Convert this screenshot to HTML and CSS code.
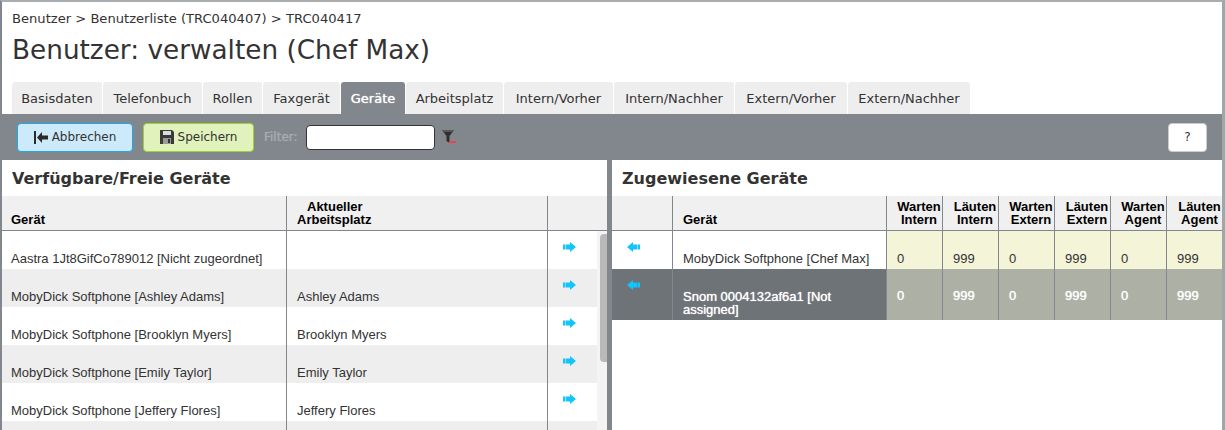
FILE: index.html
```html
<!DOCTYPE html>
<html lang="de">
<head>
  <meta charset="UTF-8">
  <title>Benutzer verwalten</title>
  <link rel="stylesheet" href="styles.css">
</head>
<body>
  <div class="page">
    <div class="crumbs">Benutzer &gt; Benutzerliste (TRC040407) &gt; TRC040417</div>
    <h1>Benutzer: verwalten (Chef Max)</h1>

    <!-- Tabs -->
    <ul class="tabs">
      <li>Basisdaten</li>
      <li>Telefonbuch</li>
      <li>Rollen</li>
      <li>Faxgerät</li>
      <li class="active">Geräte</li>
      <li>Arbeitsplatz</li>
      <li>Intern/Vorher</li>
      <li>Intern/Nachher</li>
      <li>Extern/Vorher</li>
      <li>Extern/Nachher</li>
    </ul>

    <!-- Toolbar -->
    <div class="toolbar">
      <button type="button" class="btn btn-cancel">
        <svg width="14" height="13" viewBox="0 0 14 13"><path d="M0 0h2v13H0zM3 6.5L8 1v3.5h6v4H8V12z" fill="#2a2a2a"/></svg>
        Abbrechen
      </button>
      <button type="button" class="btn btn-save">
        <svg width="14" height="14" viewBox="0 0 14 14"><path d="M0 0h12l2 2v12H0z" fill="#3a3a3a"/><path d="M3 1h8v4H3z" fill="#ddd"/><path d="M3 8h8v6H3z" fill="#9a9a9a"/><path d="M8 9h2v4H8z" fill="#333"/></svg>
        Speichern
      </button>
      <label class="filter-label" for="filter">Filter:</label>
      <input type="text" id="filter" class="filter-input">
      <svg class="filter-icon" width="14" height="15" viewBox="0 0 14 15"><path d="M0 0h12L7.5 6v7l-3-2V6z" fill="#2f2f2f"/><path d="M0 0h12l-2 2H2z" fill="#5a5a5a"/><path d="M7 11h7v2H7z" fill="#e8434a"/></svg>
      <button type="button" class="btn btn-help">?</button>
    </div>

    <div class="panels">
      <!-- Left panel -->
      <section class="panel panel-left">
        <h2>Verfügbare/Freie Geräte</h2>
        <table class="grid">
          <colgroup><col class="c-device"><col class="c-place"><col></colgroup>
          <thead>
            <tr>
              <th>Gerät</th>
              <th class="th-place"><span class="th-indent">Aktueller</span><br>Arbeitsplatz</th>
              <th></th>
            </tr>
          </thead>
        </table>
        <div class="scroll-body">
          <table class="grid">
            <colgroup><col class="c-device"><col class="c-place"><col></colgroup>
            <tbody>
              <tr><td>Aastra 1Jt8GifCo789012 [Nicht zugeordnet]</td><td class="place"></td><td class="act"><svg class="arrow" width="13" height="10" viewBox="0 0 13 10"><path d="M0 2.5h2v5H0zM2.5 2.5H7V0l6 5-6 5V7.5H2.5z" fill="#12c6fb"/></svg></td></tr>
              <tr class="alt"><td>MobyDick Softphone [Ashley Adams]</td><td class="place">Ashley Adams</td><td class="act"><svg class="arrow" width="13" height="10" viewBox="0 0 13 10"><path d="M0 2.5h2v5H0zM2.5 2.5H7V0l6 5-6 5V7.5H2.5z" fill="#12c6fb"/></svg></td></tr>
              <tr><td>MobyDick Softphone [Brooklyn Myers]</td><td class="place">Brooklyn Myers</td><td class="act"><svg class="arrow" width="13" height="10" viewBox="0 0 13 10"><path d="M0 2.5h2v5H0zM2.5 2.5H7V0l6 5-6 5V7.5H2.5z" fill="#12c6fb"/></svg></td></tr>
              <tr class="alt"><td>MobyDick Softphone [Emily Taylor]</td><td class="place">Emily Taylor</td><td class="act"><svg class="arrow" width="13" height="10" viewBox="0 0 13 10"><path d="M0 2.5h2v5H0zM2.5 2.5H7V0l6 5-6 5V7.5H2.5z" fill="#12c6fb"/></svg></td></tr>
              <tr><td>MobyDick Softphone [Jeffery Flores]</td><td class="place">Jeffery Flores</td><td class="act"><svg class="arrow" width="13" height="10" viewBox="0 0 13 10"><path d="M0 2.5h2v5H0zM2.5 2.5H7V0l6 5-6 5V7.5H2.5z" fill="#12c6fb"/></svg></td></tr>
              <tr class="alt"><td>&nbsp;</td><td class="place"></td><td class="act"></td></tr>
            </tbody>
          </table>
          <div class="scrollbar"><div class="thumb"></div></div>
        </div>
      </section>

      <!-- Right panel -->
      <section class="panel panel-right">
        <h2>Zugewiesene Geräte</h2>
        <table class="grid grid-right">
          <colgroup><col class="c-act"><col class="c-name"><col class="c-num"><col class="c-num"><col class="c-num"><col class="c-num"><col class="c-num"><col class="c-num"></colgroup>
          <thead>
            <tr>
              <th></th>
              <th class="name">Gerät</th>
              <th class="center">Warten<br>Intern</th>
              <th class="center">Läuten<br>Intern</th>
              <th class="center">Warten<br>Extern</th>
              <th class="center">Läuten<br>Extern</th>
              <th class="center">Warten<br>Agent</th>
              <th class="center">Läuten<br>Agent</th>
            </tr>
          </thead>
          <tbody>
            <tr class="assigned">
              <td class="act"><svg class="arrow" width="13" height="10" viewBox="0 0 13 10"><path d="M13 2.5h-2v5h2zM10.500 2.500H6V0L0 5l6 5V7.500h4.500z" fill="#12c6fb"/></svg></td>
              <td class="name">MobyDick Softphone [Chef Max]</td>
              <td class="num">0</td><td class="num">999</td><td class="num">0</td><td class="num">999</td><td class="num">0</td><td class="num">999</td>
            </tr>
            <tr class="assigned selected">
              <td class="act"><svg class="arrow" width="13" height="10" viewBox="0 0 13 10"><path d="M13 2.5h-2v5h2zM10.500 2.500H6V0L0 5l6 5V7.500h4.500z" fill="#12c6fb"/></svg></td>
              <td class="name">Snom 0004132af6a1 [Not assigned]</td>
              <td class="num">0</td><td class="num">999</td><td class="num">0</td><td class="num">999</td><td class="num">0</td><td class="num">999</td>
            </tr>
          </tbody>
        </table>
      </section>
    </div>
  </div>
</body>
</html>
```

FILE: styles.css
```css
* {
  margin: 0;
  padding: 0;
  box-sizing: border-box;
}

html, body {
  height: 100%;
  overflow: hidden;
}

body {
  background: #fff;
  font-family: "DejaVu Sans", sans-serif;
  color: #333;
}

.page {
  height: 430px;
  border-top: 2px solid #a9adb0;
  border-left: 2px solid #82878d;
  border-right: 3px solid #a3a5a7;
}

.crumbs {
  font-size: 13.1px;
  line-height: 16px;
  padding: 9px 0 0 10px;
  color: #333;
}

h1 {
  font-size: 26.3px;
  font-weight: normal;
  line-height: 32px;
  padding: 7px 0 0 10px;
  height: 55px;
}

.tabs {
  display: flex;
  list-style: none;
  gap: 1px;
  padding-left: 10px;
}

.tabs li {
  height: 32px;
  line-height: 33px;
  text-align: center;
  font-size: 13px;
  background: #eeeeee;
  border-radius: 3px 3px 0 0;
}

.tabs li:nth-child(1) { width: 90px; }
.tabs li:nth-child(2) { width: 99px; }
.tabs li:nth-child(3) { width: 59px; }
.tabs li:nth-child(4) { width: 77px; }
.tabs li:nth-child(5) { width: 64px; }
.tabs li:nth-child(6) { width: 97px; }
.tabs li:nth-child(7) { width: 109px; }
.tabs li:nth-child(8) { width: 120px; }
.tabs li:nth-child(9) { width: 112px; }
.tabs li:nth-child(10) { width: 122px; }

.tabs li.active {
  background: #82878d;
  color: #fff;
  text-shadow: 0 0 1px #fff;
}

.toolbar {
  display: flex;
  align-items: center;
  height: 46px;
  padding: 0 15px;
  background: #82878d;
}

.btn {
  display: flex;
  align-items: center;
  justify-content: center;
  gap: 4px;
  height: 29px;
  font-family: "DejaVu Sans", sans-serif;
  font-size: 12px;
  color: #333;
  border-radius: 4px;
  cursor: pointer;
}

.btn-cancel {
  width: 116px;
  background: #cdeafa;
  border: 1px solid #17a9f0;
}

.btn-save {
  width: 111px;
  margin-left: 10px;
  background: #e1f2bd;
  border: 1px solid #a0d42c;
}

.filter-label {
  margin-left: 10px;
  font-size: 12px;
  color: #a7abaf;
  text-shadow: 0 0 1px #a7abaf;
}

.filter-input {
  width: 129px;
  height: 25px;
  margin-left: 8px;
  border: 1px solid #333;
  border-radius: 4px;
  background: #fff;
}

.filter-icon {
  margin-left: 7px;
}

.btn-help {
  width: 39px;
  margin-left: auto;
  background: #fff;
  border: 1px solid #ccc;
}

.panels {
  display: flex;
  height: 270px;
  background: #82878d;
}

.panel {
  overflow: hidden;
  background: #fff;
}

.panel-left {
  width: 605px;
}

.panel-right {
  width: 610px;
  margin-left: 5px;
}

h2 {
  font-size: 16px;
  font-weight: bold;
  line-height: 20px;
  height: 36px;
  padding: 9px 0 0 10px;
  color: #333;
}

/* tables */
.grid {
  width: 100%;
  table-layout: fixed;
  border-collapse: separate;
  border-spacing: 0;
  font-family: "Liberation Sans", sans-serif;
  font-size: 13px;
  line-height: 13px;
  color: #333;
}

.grid th {
  height: 35px;
  padding: 0 0 4px 9px;
  background: #f0f0f0;
  color: #000;
  text-align: left;
  vertical-align: bottom;
  border-right: 1px solid #82878d;
  border-bottom: 1px solid #82878d;
}

.grid th:last-child {
  border-right: none;
}

.grid th.center {
  padding: 4px 0 4px 9px;
  text-align: center;
}

.grid th.th-place,
.grid th.name,
.grid td.place,
.grid td.name {
  padding-left: 10px;
}

.th-indent {
  padding-left: 10px;
}

.grid td {
  height: 38px;
  padding: 0 8px 4px 9px;
  vertical-align: bottom;
  border-right: 1px solid #82878d;
}

.grid td:last-child {
  border-right: none;
}

.grid td.act {
  padding: 11px 0 0 15px;
  vertical-align: top;
}

.arrow {
  display: block;
}

.c-device { width: 285px; }
.c-place { width: 261px; }
.c-act { width: 61px; }
.c-name { width: 214px; }
.c-num { width: 56px; }

.alt td {
  background: #eeeeee;
}

.scroll-body {
  display: flex;
  height: 199px;
  overflow: hidden;
}

.scroll-body .grid {
  width: 595px;
  flex: none;
  align-self: flex-start;
}

.scrollbar {
  flex: 1;
  padding: 3px 0 0 3px;
  background: #f4f4f4;
}

.thumb {
  height: 128px;
  border-radius: 4px 0 0 4px;
  background: #b9b9b9;
}

.assigned td {
  background: #f4f4d8;
}

.assigned td.act,
.assigned td.name {
  background: #fff;
}

.grid td.num {
  padding-left: 10px;
  padding-right: 0;
}

.assigned.selected td {
  background: #adb0a4;
  color: #fff;
  text-shadow: 0 0 1px #fff;
  height: 51px;
}

.assigned.selected td.act,
.assigned.selected td.name {
  background: #6d7377;
}

.assigned.selected td.num {
  vertical-align: middle;
  padding-top: 2px;
  padding-bottom: 0;
}
```
